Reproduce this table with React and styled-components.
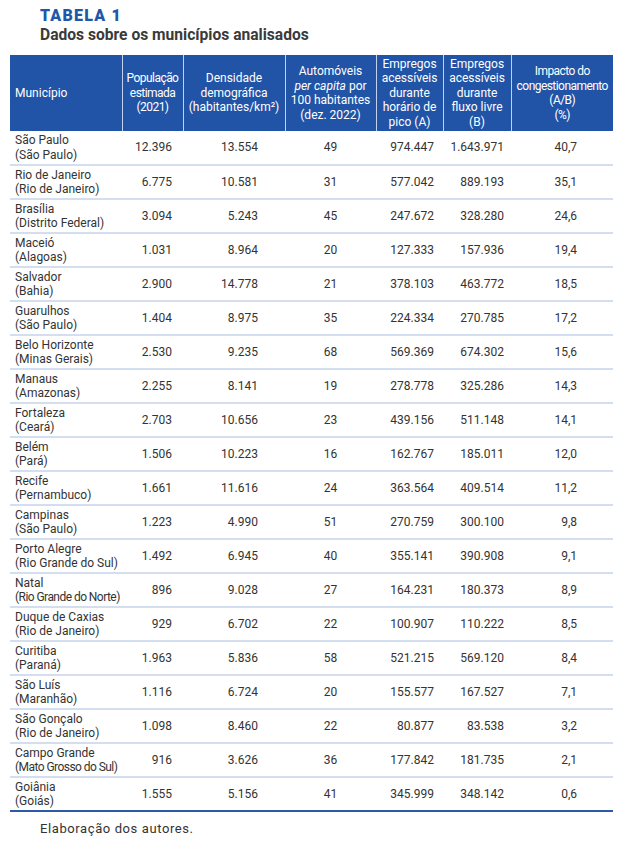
import React from "react";
import styled, { createGlobalStyle } from "styled-components";

const Global = createGlobalStyle`
  html, body { margin: 0; padding: 0; background: #fff; }
  body { font-family: Roboto, "Liberation Sans", sans-serif; color: #333; }
`;

const Page = styled.div`
  width: 627px;
  padding: 7px 14px 0 10px;
  box-sizing: border-box;
`;

const Heading = styled.div`
  padding-left: 30px;
  display: flex;
  flex-direction: column;
  gap: 1px;
  margin-bottom: 11px;
`;

const Kicker = styled.div`
  font-size: 16px;
  line-height: 18px;
  font-weight: 900;
  letter-spacing: 1.2px;
  color: #2157a8;
`;

const Title = styled.div`
  font-size: 15.6px;
  line-height: 18px;
  font-weight: 700;
  color: #3a3a3a;
`;

const Table = styled.table`
  width: 603px;
  border-collapse: collapse;
  table-layout: fixed;
  border-bottom: 2px solid #2a5aa8;
`;

const Th = styled.th`
  background: #2153a7;
  color: #fff;
  font-weight: 400;
  font-size: 12px;
  line-height: 14.5px;
  height: 76px;
  padding: 0 2px 0 ${(p) => (p.$left ? "5px" : "2px")};
  text-align: ${(p) => (p.$left ? "left" : "center")};
  letter-spacing: ${(p) => (p.$tight ? "-0.55px" : "0")};
  vertical-align: middle;
  border-left: 1.5px solid #c3d2ec;
  &:first-child { border-left: none; }
  em { font-style: italic; }
`;

const Tr = styled.tr`
  height: 34px;
  border-bottom: 2px solid #d3def1;
  &:last-child { border-bottom: none; }
`;

const Td = styled.td`
  font-size: 12px;
  line-height: 14.5px;
  color: #333;
  vertical-align: middle;
  padding: 0 ${(p) => p.$pad || 0}px 0 ${(p) => (p.$align === "left" ? 5 : 0)}px;
  text-align: ${(p) => p.$align};
`;

const Sub = styled.span`
  display: block;
  letter-spacing: ${(p) => (p.$tight ? "-0.55px" : "0")};
`;

const Footer = styled.div`
  padding: 9px 0 0 30px;
  font-size: 13px;
  letter-spacing: 0.6px;
  color: #333;
`;

const cols = [
  { w: 112, align: "left" },
  { w: 61, align: "right", pad: 11 },
  { w: 102, align: "right", pad: 27 },
  { w: 91, align: "center" },
  { w: 67, align: "right", pad: 9 },
  { w: 68, align: "right", pad: 7 },
  { w: 102, align: "right", pad: 36 },
];

const rows = [
  ["São Paulo", "(São Paulo)", "12.396", "13.554", "49", "974.447", "1.643.971", "40,7"],
  ["Rio de Janeiro", "(Rio de Janeiro)", "6.775", "10.581", "31", "577.042", "889.193", "35,1"],
  ["Brasília", "(Distrito Federal)", "3.094", "5.243", "45", "247.672", "328.280", "24,6"],
  ["Maceió", "(Alagoas)", "1.031", "8.964", "20", "127.333", "157.936", "19,4"],
  ["Salvador", "(Bahia)", "2.900", "14.778", "21", "378.103", "463.772", "18,5"],
  ["Guarulhos", "(São Paulo)", "1.404", "8.975", "35", "224.334", "270.785", "17,2"],
  ["Belo Horizonte", "(Minas Gerais)", "2.530", "9.235", "68", "569.369", "674.302", "15,6"],
  ["Manaus", "(Amazonas)", "2.255", "8.141", "19", "278.778", "325.286", "14,3"],
  ["Fortaleza", "(Ceará)", "2.703", "10.656", "23", "439.156", "511.148", "14,1"],
  ["Belém", "(Pará)", "1.506", "10.223", "16", "162.767", "185.011", "12,0"],
  ["Recife", "(Pernambuco)", "1.661", "11.616", "24", "363.564", "409.514", "11,2"],
  ["Campinas", "(São Paulo)", "1.223", "4.990", "51", "270.759", "300.100", "9,8"],
  ["Porto Alegre", "(Rio Grande do Sul)", "1.492", "6.945", "40", "355.141", "390.908", "9,1"],
  ["Natal", "(Rio Grande do Norte)", "896", "9.028", "27", "164.231", "180.373", "8,9", true],
  ["Duque de Caxias", "(Rio de Janeiro)", "929", "6.702", "22", "100.907", "110.222", "8,5"],
  ["Curitiba", "(Paraná)", "1.963", "5.836", "58", "521.215", "569.120", "8,4"],
  ["São Luís", "(Maranhão)", "1.116", "6.724", "20", "155.577", "167.527", "7,1"],
  ["São Gonçalo", "(Rio de Janeiro)", "1.098", "8.460", "22", "80.877", "83.538", "3,2"],
  ["Campo Grande", "(Mato Grosso do Sul)", "916", "3.626", "36", "177.842", "181.735", "2,1", true],
  ["Goiânia", "(Goiás)", "1.555", "5.156", "41", "345.999", "348.142", "0,6"],
];

export default function App() {
  return (
    <Page>
      <Global />
      <Heading>
        <Kicker>TABELA 1</Kicker>
        <Title>Dados sobre os municípios analisados</Title>
      </Heading>
      <Table>
        <colgroup>
          {cols.map((c, i) => (
            <col key={i} style={{ width: c.w }} />
          ))}
        </colgroup>
        <thead>
          <tr>
            <Th $left>Município</Th>
            <Th $tight>População<br />estimada<br />(2021)</Th>
            <Th>Densidade<br />demográfica<br />(habitantes/km²)</Th>
            <Th>Automóveis<br /><em>per capita</em> por<br />100 habitantes<br />(dez. 2022)</Th>
            <Th>Empregos<br />acessíveis<br />durante<br />horário de<br />pico (A)</Th>
            <Th>Empregos<br />acessíveis<br />durante<br />fluxo livre<br />(B)</Th>
            <Th $tight>Impacto do<br />congestionamento<br />(A/B)<br />(%)</Th>
          </tr>
        </thead>
        <tbody>
          {rows.map((r) => (
            <Tr key={r[0]}>
              <Td $align="left">
                <Sub>{r[0]}</Sub>
                <Sub $tight={r[8]}>{r[1]}</Sub>
              </Td>
              {r.slice(2, 8).map((v, i) => (
                <Td key={i} $align={cols[i + 1].align} $pad={cols[i + 1].pad}>
                  {v}
                </Td>
              ))}
            </Tr>
          ))}
        </tbody>
      </Table>
      <Footer>Elaboração dos autores.</Footer>
    </Page>
  );
}
